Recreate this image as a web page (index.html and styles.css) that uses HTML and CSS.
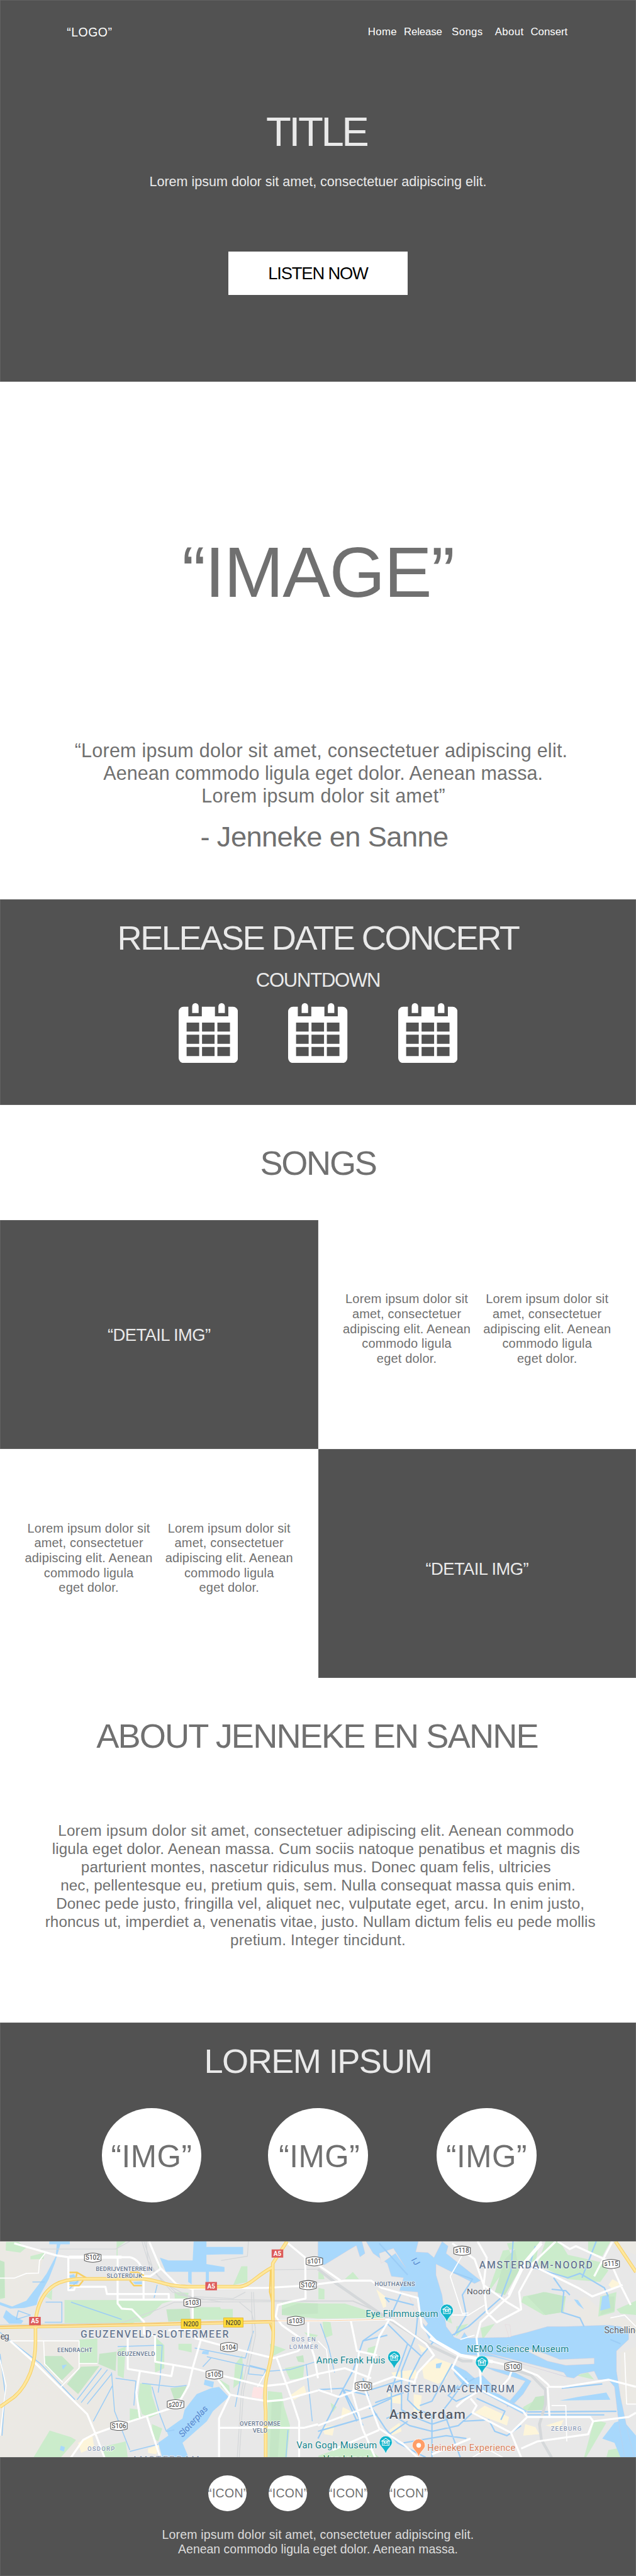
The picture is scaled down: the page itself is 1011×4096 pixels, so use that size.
FILE: index.html
```html
<!DOCTYPE html>
<html lang="en">
<head>
<meta charset="utf-8">
<title>Jenneke en Sanne</title>
<link rel="stylesheet" href="styles.css">
</head>
<body>
<section class="hero dark">
  <header class="topbar">
    <div class="logo">“LOGO”</div>
    <nav class="nav">
      <a class="nav-home">Home</a><a class="nav-release">Release</a><a class="nav-songs">Songs</a><a class="nav-about">About</a><a>Consert</a>
    </nav>
  </header>
  <h1 class="hero-title">TITLE</h1>
  <p class="hero-sub">Lorem ipsum dolor sit amet, consectetuer adipiscing elit.</p>
  <a class="listen">LISTEN NOW</a>
</section>

<section class="image">
  <div class="image-label">“IMAGE”</div>
  <blockquote class="quote">
    <span class="q1">“Lorem ipsum dolor sit amet, consectetuer adipiscing elit.</span>
    <span class="q2">Aenean commodo ligula eget dolor. Aenean massa.</span>
    <span class="q3">Lorem ipsum dolor sit amet”</span>
  </blockquote>
  <p class="author">- Jenneke en Sanne</p>
</section>

<section class="concert dark">
  <h2 class="heading">RELEASE DATE CONCERT</h2>
  <p class="countdown">COUNTDOWN</p>
  <svg width="0" height="0" class="defs"><defs>
    <g id="cal">
      <path fill="#fff" fill-rule="evenodd" d="M15 11H29.3V39.7H70V11H109.6V39.7H150V11H164A15 15 0 0 1 179 26V166A15 15 0 0 1 164 181H15A15 15 0 0 1 0 166V26A15 15 0 0 1 15 11ZM24 59V86H62V59ZM70.600 59V86H108.500V59ZM117 59V86H155V59ZM24 95.700V123H62V95.700ZM70.600 95.700V123H108.500V95.700ZM117 95.700V123H155V95.700ZM24 132.700V160H62V132.700ZM70.600 132.700V160H108.500V132.700ZM117 132.700V160H155V132.700Z"/>
      <path fill="#fff" d="M40.800 30V9.750a9.750 9.750 0 0 1 19.500 0V30ZM120 30V9.750a9.750 9.750 0 0 1 19.500 0V30Z"/>
    </g></defs></svg>
  <div class="calendars">
    <svg viewBox="0 0 179 181"><use href="#cal"/></svg>
    <svg viewBox="0 0 179 181"><use href="#cal"/></svg>
    <svg viewBox="0 0 179 181"><use href="#cal"/></svg>
  </div>
</section>

<section class="songs"><h2 class="heading songs-title">SONGS</h2></section>
<section class="details">
  <div class="detail-img dark first">“DETAIL IMG”</div>
  <div class="cols">
    <p>Lorem ipsum dolor sit<br>amet, consectetuer<br>adipiscing elit. Aenean<br>commodo ligula<br>eget dolor.</p>
    <p>Lorem ipsum dolor sit<br>amet, consectetuer<br>adipiscing elit. Aenean<br>commodo ligula<br>eget dolor.</p>
  </div>
  <div class="cols">
    <p>Lorem ipsum dolor sit<br>amet, consectetuer<br>adipiscing elit. Aenean<br>commodo ligula<br>eget dolor.</p>
    <p>Lorem ipsum dolor sit<br>amet, consectetuer<br>adipiscing elit. Aenean<br>commodo ligula<br>eget dolor.</p>
  </div>
  <div class="detail-img dark second">“DETAIL IMG”</div>
</section>

<section class="about">
  <h2 class="heading about-title">ABOUT JENNEKE EN SANNE</h2>
  <p class="bio">
    <span class="left wide">Lorem ipsum dolor sit amet, consectetuer adipiscing elit. Aenean commodo</span>
    <span class="left">ligula eget dolor. Aenean massa. Cum sociis natoque penatibus et magnis dis</span>
    <span class="left">parturient montes, nascetur ridiculus mus. Donec quam felis, ultricies</span>
    <span>nec, pellentesque eu, pretium quis, sem. Nulla consequat massa quis enim.</span>
    <span class="right">Donec pede justo, fringilla vel, aliquet nec, vulputate eget, arcu. In enim justo,</span>
    <span class="right">rhoncus ut, imperdiet a, venenatis vitae, justo. Nullam dictum felis eu pede mollis</span>
    <span class="wide">pretium. Integer tincidunt.</span>
  </p>
</section>

<section class="lorem dark">
  <h2 class="heading lorem-title">LOREM IPSUM</h2>
  <div class="circles"><div>“IMG”</div><div class="mid">“IMG”</div><div>“IMG”</div></div>
</section>

<svg class="map" viewBox="0 0 1920 652" preserveAspectRatio="none">
  <defs>
    <g id="museum"><path d="M0 35C-5 17-19.500 12-19.500 0a19.500 19.500 0 0 1 39 0C19.500 12 5 17 0 35Z" fill="#12b5cb" stroke="#fff" stroke-width="1.500"/><path d="M-12-4 0-12 12-4ZM-10-4V9H10V-4M-11 9H11" fill="none" stroke="#fff" stroke-width="2"/><path d="M-5 6V-2L0 3 5-2V6" fill="none" stroke="#fff" stroke-width="2.200"/></g>
    <path id="sh" d="M-25-9Q-10-14 0-14T25-9V9Q10 14 0 14T-25 9Z" fill="#fff" stroke="#5a5a5a" stroke-width="2"/>
  </defs>
  <rect width="1920" height="652" fill="#e8e8e8"/>
  <g transform="scale(.6122 .4337) translate(0 -47)">
    <!-- open land -->
    <g fill="#ebe9e4">
      <path d="M0 47H60L225 120 190 270 240 330 150 480 60 500 0 480ZM0 650H170L215 740H480V900L560 1000 580 1300 480 1400 350 1552H0ZM2790 480 2890 430 2990 560 3136 600V660L2900 630 2800 560ZM3060 820 3136 780V1180H3060ZM2960 47H3136V140Z"/>
    </g>
    <!-- parks -->
    <g fill="#cbeccb">
      <path d="M30 50H90L130 90 100 125 28 110ZM150 150 220 125 215 170 150 172ZM0 180 22 190 25 440 0 450ZM575 47H620L580 90V300H575ZM318 455H860L800 480 740 560 650 620 318 615ZM318 455H580L650 520 700 610H318ZM955 505H1085L1090 518H1148V592H955ZM390 730 480 725V895H390ZM245 1365 350 1410 375 1430 300 1552H165ZM225 430 258 380 255 455ZM860 400 930 405 925 445H862ZM1190 220H1220V330L1150 350ZM760 705 810 770V930L765 960ZM880 760 945 760 945 820 880 800ZM690 1035 745 1045 750 1120 780 1250 740 1275 700 1250 680 1150ZM640 1210 690 1220 700 1280 640 1300ZM750 1320 800 1350 780 1440 750 1410ZM500 1480 620 1440 630 1552H520ZM1320 1090 1390 1100 1400 1190 1430 1330 1415 1552H1320ZM1080 1005 1130 1050 1135 1110 1090 1060ZM1195 840 1200 1010 1150 1070 1160 900ZM1390 470H1440L1568 480 1700 480 1880 560 1890 580 1568 585 1390 560ZM770 150 800 240 780 230ZM1405 930 1500 905 1495 1000 1430 1010ZM1330 760 1410 800 1340 850ZM1500 680 1568 700 1540 740ZM580 800 620 780 610 1000 580 980Z"/>
      <path d="M2500 60 2560 47H2660L2640 200 2540 220ZM2690 47H2760L2800 140 2960 190 3000 250 2960 330 2800 310 2650 210ZM2400 420 2520 180 2540 100 2480 110ZM2580 430 2690 400 2790 430 2780 540 2680 560 2570 470ZM2960 430 3040 400 3030 540 2950 570ZM3040 520 3136 460V560L3060 550ZM2250 640 2310 620 2250 710ZM2370 650 2440 620 2380 730ZM2900 47H3010L2970 150 2900 120ZM2580 1200 2680 1120 2690 1220 2580 1225ZM2200 600 2220 570 2230 620ZM1570 1540 1690 1480 1830 1500 1870 1552H1570ZM2930 1290 2990 1310 2890 1552H2880ZM3000 1500 3080 1480 3110 1552H2990ZM2690 860 2740 870 2760 900 2700 900ZM2820 870 2910 855V880L2820 885ZM2840 980 2900 960 2930 1010ZM1570 260H1590L1600 310 1570 310ZM1590 600 1630 610 1640 700 1600 720ZM1630 1170 1660 1200 1640 1240ZM1740 260 1770 310H1700ZM1570 370 1600 380V450H1570ZM1815 790 1860 770 1850 840 1810 820Z"/>
    </g>
    <g fill="#c5e6c6">
      <path d="M820 520 935 515 940 600 830 605ZM220 845 305 845 365 930 305 1015 225 920ZM400 920 490 915 385 1110 330 1040ZM490 830 575 815 570 950 485 900ZM1470 480 1568 480V550L1390 560 1390 520ZM1340 1150 1390 1160 1370 1552H1330ZM840 1070 920 1055 900 1130 860 1150ZM1460 850 1495 840 1500 890 1470 885ZM0 180 22 190 22 440 0 440ZM2440 400 2490 170 2540 100 2560 250 2490 420ZM2600 430 2680 400 2790 430 2770 540 2690 560ZM2640 1130 2690 1120 2680 1220 2600 1225ZM2990 430 3030 430 3030 530 2960 560Z"/>
    </g>
    <!-- built-up commercial areas -->
    <g fill="#fdf5da">
      <path d="M385 1450 455 1400 465 1480 400 1520ZM730 1490 790 1460 770 1530 730 1520ZM1855 380 1900 430 1905 500 1890 510ZM2080 920 2150 860 2230 900 2200 1000 2160 1040 2090 1000ZM1930 960 2050 940 2060 1000 1950 1010ZM1910 1110 1980 1120 1985 1180 1925 1170ZM2040 1110 2080 1120 2070 1230 2040 1260ZM2390 1190 2510 1270 2500 1330 2340 1240ZM1690 1200 1730 1230 1680 1290ZM1590 1340 1650 1330 1640 1400 1600 1390ZM2590 1320 2640 1340 2660 1390 2580 1400ZM2690 1330 2780 1290 2760 1350ZM3020 310 3060 340 3020 380 3000 350ZM2060 760 2110 800 2080 820ZM1920 1360 1970 1310 1980 1370 1930 1400ZM1430 1120 1500 1050 1510 1100 1450 1150Z"/>
    </g>
    <path fill="#fde4e4" d="M1250 1060 1300 1065 1290 1145 1240 1130Z"/>
    <!-- water -->
    <g fill="#a8d8fc" stroke="#e6c3cc" stroke-width="1" >
      <path stroke="none" d="M243 47H344V67H298L270 200 240 310 190 440 180 490 120 510 50 515 0 490V470L60 500 130 460 200 330 230 270 275 150 280 67H243ZM30 525 60 560 115 600 105 620H45L15 575ZM955 47H1018V85H1199V137H1100L1018 140V205L1107 225V258H1030V330H1015V260H945V345L928 330V258H818L788 160 830 180H950ZM340 285 365 275 375 300H345ZM655 328 700 325V345H665ZM340 325 390 325 380 345H340ZM1000 810 1030 810 1028 835 995 830ZM1010 1010 1055 1025 1050 1065 1005 1045ZM1080 1060 1128 1130 1050 1230 1020 1300 900 1450 930 1552H800L780 1450 830 1400 820 1360 900 1280 910 1220 970 1110 1040 1070ZM305 910 330 905 310 940ZM300 1470 320 1480 315 1510 295 1500ZM2830 450 2850 455 2880 520 2850 490ZM2970 430 3000 420 3010 510 2960 530ZM3030 1310 3070 1290 3136 1400V1552H3060L3030 1450 2970 1420ZM2850 1130 2990 1100 3010 1150 2760 1155ZM2150 900 2180 890 2170 930 2150 930Z"/>
      <path d="M1568 47H1785L1800 130 1775 155 1757 75 1715 110 1600 210 1568 200ZM1805 47H2063L2050 120 2110 125 2140 160 2180 47 2210 80 2200 130 2370 320 2340 340 2150 205 2150 280 2180 420 2200 640 2240 715 2270 730 2290 680 2310 720 2500 715 2600 680 2700 640 2790 640 3000 630 3060 640 3100 680 3100 730 3040 810 3040 950 3060 1130 3100 1400 3130 1552H3080L3050 1300 3030 1060 3000 1010 2950 1010 2930 950 2860 970 2830 1000 2790 990 2600 910 2430 850 2250 830 2120 740 2100 680 2070 560 2060 400 1970 390 1990 300 1930 290 1910 200 1840 130Z"/>
      <path fill="#e8e8e8" d="M1870 130 1940 95 2000 230 1950 130 1880 200ZM2490 625 2510 715 2520 710 2515 630ZM2390 820 2560 880 2780 960 2795 990 2600 910ZM2540 770 2690 830 2760 870 2930 860 2930 900 2790 910 2700 880ZM2020 440 2050 560 2100 640 2110 620Z"/>
      <path d="M2230 900 2300 950 2340 1000 2380 980 2450 1080 2420 1090 2460 1110 2600 1230 2580 1250 2380 1100 2280 1040 2240 970ZM2390 920 2540 960 2620 1020 2580 1110 2540 1170 2500 1200 2500 1180 2560 1080 2590 1020 2440 950Z"/>
    </g>
    <!-- canals -->
    <g fill="none" stroke="#9ccdf6" stroke-linejoin="round">
      <path stroke-width="1.500" vector-effect="non-scaling-stroke" d="M0 680 90 780 200 900 370 1150M225 470H305V610H220M580 780 800 770 790 1000 780 1100M570 1000 670 1020 660 1190M550 960 565 1230 640 1500M380 1150 500 930M400 1170 530 940M430 1180 550 970M460 1300 555 1050M700 1035 860 1060 920 1050M750 1060 790 1260 820 1370 860 1360M960 790 1210 860 1250 670M1020 850 1330 950 1430 940 1568 880M1200 900 1160 1200M640 1510 780 1460M1000 920 1040 860M1420 1360 1410 1552M1510 900 1540 1300M1230 910 1310 940 1300 980 1225 970ZM1580 620 1620 780 1650 960M0 830 25 1100 10 1400M160 330H220M90 530 150 560 80 590ZM350 470 600 590M760 440 775 350M340 380 400 300H700"/>
      <path stroke-width="2.200" vector-effect="non-scaling-stroke" d="M1980 400 1910 620 1790 740 1740 950 1690 1080 1568 1420M1910 620 2010 760 1930 1080 1930 1250 2020 1330 2130 1370 2260 1330 2330 1240M2060 560 2050 700 1980 950 1980 1220 2060 1280 2130 1320 2240 1270M2140 740 2070 860 2020 1000 2010 1150 2060 1220 2120 1250M1790 740 1910 700M1820 1120 1700 1080M1790 1000 1830 1200 1900 1350 1960 1450 2100 1552M1830 1080 1990 1010M1850 1170 1990 1100M2230 900 2130 1160 2070 1190M2300 1000 2220 1160 2170 1250M2380 1080 2250 1160 2210 1120 2260 1050M1568 1370 1860 1250M2130 1250 2130 1552M2190 1240 2270 1552M2280 1300 2410 1290 2440 1370 2500 1400 2570 1330M2340 1000 2220 1100M2350 1140 2490 1230 2470 1290M2600 1235 3040 1230M2600 1255 2980 1255M2530 47 2520 250 2470 440 2310 640 2230 700M2230 260 2330 310 2280 420 2300 560 2240 700M2730 300 2780 400 2770 540 2860 580 2880 640M2720 380 2790 390 2810 420M1920 470 1900 440 2040 490M1990 1450 2200 1400 2300 1420M1568 1080 1690 1070 1790 1330M1690 1080 1760 1300M2770 1070 2970 1040M2640 80 2610 220 2800 300 2860 270 2980 370 3000 430M2940 47 2870 300M2010 760 2080 850M1905 1280 1990 1230M1820 1210 1930 1140M1920 1390 2010 1300M3010 730 3060 760M1870 60 2010 280"/>
    </g>
    <!-- railways -->
    <g fill="none" stroke="#d5d8da" stroke-linejoin="round">
      <path stroke-width="1.300" vector-effect="non-scaling-stroke" d="M0 628 600 615 780 520 860 470 1568 465M200 100H570L640 47M700 47 740 230 850 400 1000 450 1568 462M710 47 760 260 880 420 1100 470M720 47 730 180 800 330 930 430 1150 445 1210 400M1250 400 1260 700 1200 1100 1180 1552M1240 400 1245 700 1190 1100 1170 1552M1180 470 1240 540 1260 650M1340 245 1568 240M1225 47 1220 150 1090 180"/>
      <path stroke-width="4.500" vector-effect="non-scaling-stroke" d="M1568 240 1650 330 1760 440 1950 620 2130 780 2280 880 2330 880M2510 930 2620 980 2690 1080 2690 1180 2660 1320 2670 1430 2720 1552"/>
      <path stroke-width="2" vector-effect="non-scaling-stroke" d="M1568 462H1740L1870 540M1640 330 1800 480"/>
    </g>
    <!-- streets -->
    <g fill="none" stroke="#fff" stroke-linejoin="round">
      <path stroke-width="1.700" vector-effect="non-scaling-stroke" d="M225 125 195 180 190 268 130 270 70 303H0M215 740 220 900 310 1030M0 870 30 1050 0 1400M50 740H390V930L300 1060M390 898H480M2270 730 2340 700M1310 960 1270 1060M2230 560 2310 560 2390 490M2220 290 2285 130M2220 290 2280 550 2310 545M1568 740 1610 800 1635 1100M2330 1552 2400 1490 2480 1552M2720 1190H2790L2795 1440M3010 580 3080 560 3136 640M3080 820 3090 1180H3136"/>
      <path stroke-width="3.200" vector-effect="non-scaling-stroke" d="M70 60 280 145 340 157H640Q700 175 708 300V450M337 157V387L365 385 370 363H520L527 413H832V455M580 157V480L600 515 650 520 710 605V690L765 700V885L950 930 1300 1055 1400 1040 1568 970M580 453H950V380M735 47 790 230 870 345 950 380V640M790 240 740 290H710M630 720V935L845 985 855 915M690 950 672 1100 690 1280M990 735 950 930 930 1050 890 1150 830 1215 590 1325 470 1385 410 1430 350 1552M50 740 170 890 430 1250 470 1385 515 1552M725 1270 790 1552M960 720 1130 785 1350 860 1470 810 1500 760M1075 1010 1135 1115 1230 1140 1320 1160 1400 1150 1568 1085M1135 1115 1080 1280V1552M1080 1345H1500L1568 1320M1365 860 1440 1150 1475 1300V1552M950 375 1320 370 1568 350M1420 60 1505 160 1507 445 1440 465 1370 490 1360 570 1390 630 1480 720M1520 610V720L1550 850 1568 1000M1370 600H1568M830 665 960 660"/>
      <path stroke-width="3.200" vector-effect="non-scaling-stroke" d="M1568 345 1700 320H1830L1880 370 2060 440 2080 640 2150 740 2270 840 2430 885 2560 930 2650 980 2700 1040 2710 1060 2780 1060 3000 1010 3136 1060M1568 210 1680 320M1568 600 1920 590 1940 600 2100 760 2140 840 2060 960 2040 1040M1730 600 1760 810 1860 840M1920 590 1870 710 1800 1080 1830 1200 1870 1350 1990 1460M1770 820 1740 1110 1790 1360 1850 1552M1568 970 1700 930 1830 1000M1568 1080 1670 1130 1730 1100 1940 990 2050 1030M1568 1330 1830 1190M1640 1500 1870 1360M2355 47 2400 160 2385 350 2500 470 2560 520M2230 60 2340 170 2385 350 2400 540 2450 610 2570 520 2560 400 2650 170M2670 47 2580 200 2510 430 2370 610 2350 720 2370 1000 2370 1080 2290 1150 2250 1200M2370 1080 2580 1230 2600 1270 2520 1380 2570 1552M2600 1270H2910L2925 1300 3100 1270 3136 1240M2700 1060 2710 1270M2925 1300 2900 1390 2650 1440 2570 1490M2320 1140 2350 1190 2330 1240 2520 1380M2530 920 2510 1000 2460 1080M2740 47 2620 210 2850 370 2920 430 3070 350M2750 47 2810 100 2840 80 3010 190 3060 350 3110 490M3020 47 2930 290M2260 840 2230 930 2310 1040M1990 1460 2060 1552M2320 1420 2130 1530"/>
      <path stroke-width="5" vector-effect="non-scaling-stroke" d="M2670 60 2590 190 2510 420M2120 720 2270 840 2430 885M340 157H600"/>
    </g>
    <!-- motorways -->
    <g fill="none" stroke="#f7cf63" stroke-linejoin="round" stroke-width="5.500">
      <path id="mw" vector-effect="non-scaling-stroke" d="M0 1200 70 1130Q120 1070 150 960 175 860 175 750V600Q190 420 270 350 320 310 400 308H700C800 320 810 360 930 362H1180C1230 360 1260 290 1340 230M0 645 740 625 1340 605M1415 47 1345 200V560C1350 700 1350 800 1320 960Q1300 1060 1310 1230V1552M3035 47 3136 260"/>
      <path stroke-width="2.500" vector-effect="non-scaling-stroke" d="M343 263H380L430 305M343 355H390L410 320M380 263 375 295M640 262 680 262 710 285M640 320 660 355H700M1335 230 1330 400 1340 460M1330 620 1350 700"/>
    </g>
    <use href="#mw" fill="none" stroke="#fee79c" stroke-width="3.500"/>
    <path d="M0 640 740 620 1340 600H1568L1900 590" fill="none" stroke="#eda45e" stroke-opacity=".6" stroke-width="1" vector-effect="non-scaling-stroke"/>
  </g>
  <!-- road shields -->
  <g font-size="19" text-anchor="middle" fill="#333">
    <use href="#sh" x="280" y="49"/><text x="280" y="56">S102</text>
    <use href="#sh" x="949" y="60"/><text x="949" y="67">s101</text>
    <use href="#sh" x="930" y="132"/><text x="930" y="139">S102</text>
    <use href="#sh" x="580" y="185"/><text x="580" y="192">s103</text>
    <use href="#sh" x="893" y="240"/><text x="893" y="247">s103</text>
    <use href="#sh" x="691" y="319"/><text x="691" y="326">s104</text>
    <use href="#sh" x="647" y="402"/><text x="647" y="409">s105</text>
    <use href="#sh" x="530" y="492"/><text x="530" y="499">s207</text>
    <use href="#sh" x="359" y="557"/><text x="359" y="564">S106</text>
    <use href="#sh" x="1395" y="28"/><text x="1395" y="35">s118</text>
    <use href="#sh" x="1845" y="68"/><text x="1845" y="75">s115</text>
    <use href="#sh" x="1549" y="378"/><text x="1549" y="385">S100</text>
    <use href="#sh" x="1097" y="437"/><text x="1097" y="444">S100</text>
    <path d="M547 235h59v28h-59ZM675 231h59v28h-59Z" fill="#fddb3a" stroke="#dfae22" stroke-width="1.500"/>
    <text x="576.500" y="256">N200</text><text x="704" y="252">N200</text>
    <path d="M820 24h35v25h-35ZM620 122.500h35v25h-35ZM88 228h35v25h-35Z" fill="#dc5c5c"/>
    <g fill="#fff" font-weight="700"><text x="837.500" y="43">A5</text><text x="637.500" y="142">A5</text><text x="105.500" y="247">A5</text></g>
  </g>
  <!-- place names -->
  <g class="labels" fill="#667791" font-weight="500">
    <g font-size="30">
      <text x="243" y="291" textLength="447">GEUZENVELD-SLOTERMEER</text>
      <text x="1446.500" y="82" textLength="342">AMSTERDAM-NOORD</text>
      <text x="1166" y="456" textLength="387">AMSTERDAM-CENTRUM</text>
    </g>
    <g font-size="18">
      <text x="289" y="89.500" textLength="171">BEDRIJVENTERREIN</text>
      <text x="322" y="110" textLength="107">SLOTERDIJK</text>
      <text x="173" y="334.500" textLength="106">EENDRACHT</text>
      <text x="354" y="346.500" textLength="114">GEUZENVELD</text>
      <text x="723.500" y="557" textLength="123">OVERTOOMSE</text>
      <text x="763" y="578" textLength="44">VELD</text>
      <text x="1131" y="135" textLength="122">HOUTHAVENS</text>
      <g fill="#8b9bb8">
        <text x="880" y="303" textLength="73">BOS EN</text>
        <text x="873" y="324" textLength="87">LOMMER</text>
        <text x="264" y="632" textLength="82">OSDORP</text>
        <text x="1663" y="571" textLength="92">ZEEBURG</text>
      </g>
    </g>
    <text x="398" y="668" font-size="28" fill="#a3aec0" textLength="204">AMSTERDAM</text>
    <g fill="#555b66" font-weight="400">
      <text x="1" y="296" font-size="28" textLength="27">eg</text>
      <text x="1409" y="159" font-size="26" textLength="72">Noord</text>
      <text x="1824" y="277" font-size="27">Schellingwoude</text>
      <text x="1175" y="536" font-size="40" font-weight="500" textLength="230">Amsterdam</text>
    </g>
    <g fill="#12838c" font-weight="400" font-size="28">
      <text x="1104" y="228" textLength="219">Eye Filmmuseum</text>
      <text x="955" y="368" textLength="208">Anne Frank Huis</text>
      <text x="1409" y="334" textLength="308">NEMO Science Museum</text>
      <text x="895" y="626" textLength="243">Van Gogh Museum</text>
      <text x="976" y="667" textLength="145" fill="#188038">Vondelpark</text>
      <text x="1290" y="633" textLength="266" fill="#d9825c">Heineken Experience</text>
    </g>
  </g>
  <g fill="#5585cc" font-style="italic">
    <text transform="translate(551 593) rotate(-48)" font-size="27" textLength="117">Sloterplas</text>
    <text transform="translate(1241 57) rotate(52)" font-size="25" textLength="22">IJ</text>
  </g>
  <use href="#museum" x="1349" y="209"/>
  <use href="#museum" x="1190" y="350"/>
  <use href="#museum" x="1455" y="365"/>
  <use href="#museum" x="1164.500" y="607"/>
  <g transform="translate(1264 616)"><path d="M0 35C-5 17-19.500 12-19.500 0a19.500 19.500 0 0 1 39 0C19.500 12 5 17 0 35Z" fill="#ff9e67" stroke="#fff" stroke-width="1.500"/><circle r="7" fill="#fff"/></g>
</svg>

<footer class="footer dark">
  <div class="icons"><div>“ICON”</div><div>“ICON”</div><div>“ICON”</div><div>“ICON”</div></div>
  <p class="foot-text"><span class="f1">Lorem ipsum dolor sit amet, consectetuer adipiscing elit.</span><span>Aenean commodo ligula eget dolor. Aenean massa.</span></p>
</footer>
</body>
</html>
```
FILE: styles.css
```css
/* 1rem is 100 units of the 1920-unit wide layout */
html { font-size: 52.635px; }
* { box-sizing: border-box; margin: 0; padding: 0; }
body {
  background: #fff;
  color: #707070;
  font-family: "Liberation Sans", Arial, sans-serif;
  font-size: .38rem;
  text-align: center;
  white-space: nowrap;
  overflow-x: hidden;
}
h1, h2 { font-weight: 400; }
.dark { background: #525252; color: #e9e9e9; box-shadow: inset 0 0 0 .5px #707070; }
.defs { position: absolute; }

.heading { font-size: 1.03rem; line-height: 1.03rem; letter-spacing: -.046em; }

/* hero */
.hero { height: 11.53rem; padding-top: .797rem; }
.topbar { display: flex; justify-content: space-between; align-items: center; height: .37rem; padding: 0 2rem 0 2.02rem; color: #fff; }
.logo { font-size: .37rem; line-height: 1; letter-spacing: .024em; }
.nav { display: grid; grid-template-columns: 1.09rem 1.445rem 1.305rem 1.075rem 1.185rem; text-align: left; font-size: .32rem; line-height: 1; }
.nav-home, .nav-songs, .nav-about { letter-spacing: .021em; }
.nav-release { letter-spacing: -.01em; }
.hero-title { margin-top: 2.193rem; padding-right: .09rem; font-size: 1.24rem; line-height: 1; letter-spacing: -.0526em; }
.hero-sub { margin-top: .69rem; font-size: .41rem; line-height: 1; letter-spacing: -.001em; }
.listen { display: flex; align-items: center; justify-content: center; width: 5.405rem; height: 1.315rem; margin: 1.905rem auto 0; background: #fff; color: #000; font-size: .52rem; letter-spacing: -.0427em; }

/* image and quote */
.image { height: 15.64rem; padding-top: 4.672rem; }
.image-label { font-size: 2.16rem; line-height: 1; letter-spacing: -.012em; }
.quote { margin-top: 3.96rem; padding-left: .19rem; font-size: .58rem; line-height: .689rem; }
.quote span, .bio span, .foot-text span { display: block; }
.q1 { letter-spacing: .0077em; }
.q2 { padding-left: .12rem; letter-spacing: .001em; }
.q3 { padding-left: .14rem; letter-spacing: .0116em; }
.author { margin-top: .459rem; padding-left: .38rem; font-size: .86rem; line-height: 1; letter-spacing: -.0134em; }

/* concert */
.concert { height: 6.22rem; padding-top: .648rem; }
.countdown { margin-top: .463rem; font-size: .59rem; line-height: 1; letter-spacing: -.04em; }
.calendars { display: flex; justify-content: center; gap: 1.53rem; margin-top: .4rem; }
.calendars svg { width: 1.79rem; height: 1.81rem; }

/* songs */
.songs { height: 3.46rem; padding-top: 1.228rem; }
.songs-title { letter-spacing: -.043em; }
.details { display: grid; grid-template-columns: 1fr 1fr; grid-template-rows: 6.92rem 6.92rem; }
.detail-img { font-size: .52rem; line-height: 1; letter-spacing: -.021em; }
.first { padding-top: 3.22rem; }
.second { padding-top: 3.365rem; }
.cols { display: grid; grid-template-columns: 4.24rem 4.24rem; padding: 2.18rem 0 0 .56rem; font-size: .38rem; line-height: .45rem; letter-spacing: .009em; }

/* about */
.about { height: 10.41rem; padding-top: 1.228rem; }
.about-title { padding-right: .06rem; letter-spacing: -.0347em; }
.bio { margin-top: 2.098rem; font-size: .46rem; line-height: .55rem; letter-spacing: .005em; }
.bio .wide { letter-spacing: .009em; }
.bio .left { padding-right: .12rem; }
.bio .right { padding-left: .14rem; }

/* image circles */
.lorem { height: 6.61rem; padding-top: .648rem; }
.lorem-title { letter-spacing: -.0296em; }
.circles { display: grid; grid-template-columns: 3.015rem 3.015rem 3.015rem; column-gap: 2.045rem; margin: .912rem 0 0 3.07rem; color: #707070; }
.circles div { display: flex; align-items: center; justify-content: center; height: 2.84rem; padding-top: .05rem; border-radius: 50%; background: #fff; font-size: .94rem; line-height: 1; letter-spacing: .0106em; }
.circles .mid { padding-left: .08rem; margin-left: -.03rem; margin-right: .03rem; }

/* map */
.map { display: block; width: 100%; height: 6.52rem; overflow: hidden; font-family: Roboto, sans-serif; }
.labels text { paint-order: stroke; stroke: #fff; stroke-opacity: .75; stroke-width: 3px; stroke-linejoin: round; }

/* footer */
.footer { height: 3.59rem; padding-top: .56rem; color: #ddd; }
.icons { display: flex; justify-content: center; gap: .666rem; padding-left: .004rem; color: #707070; }
.icons div { display: flex; align-items: center; justify-content: center; width: 1.155rem; height: 1.08rem; border-radius: 50%; background: #fff; font-size: .37rem; line-height: 1; letter-spacing: .016em; }
.foot-text { margin-top: .484rem; font-size: .37rem; line-height: .44rem; }
.f1 { letter-spacing: .01em; }
```
